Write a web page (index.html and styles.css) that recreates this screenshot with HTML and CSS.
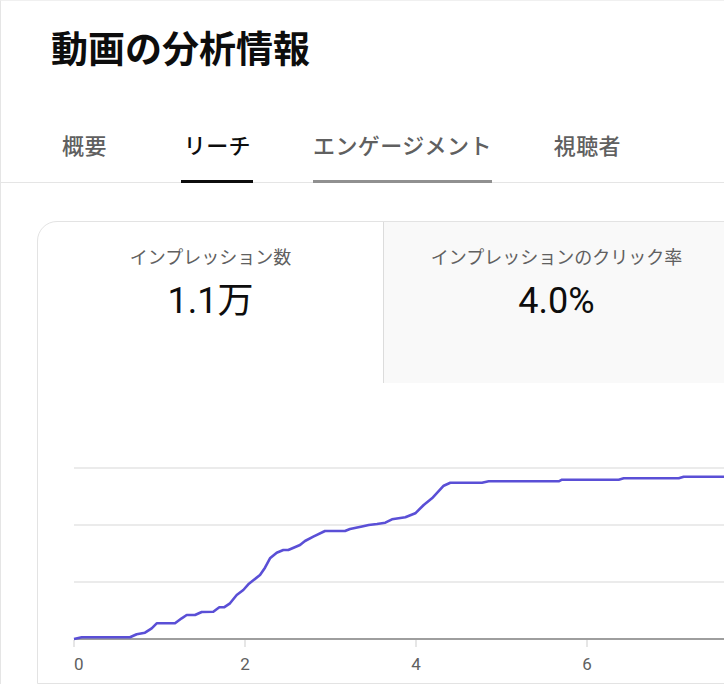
FILE: index.html
```html
<!DOCTYPE html>
<html lang="ja">
<head>
    <meta charset="UTF-8">
    <meta name="viewport" content="width=device-width, initial-scale=1.0">
    <title>動画の分析情報</title>
    <link rel="stylesheet" href="styles.css">
</head>
<body>
    <div class="page">
        <h1 class="page-title">動画の分析情報</h1>

        <nav class="tabs">
            <a class="tab first">概要</a>
            <a class="tab active">リーチ</a>
            <a class="tab hover">エンゲージメント</a>
            <a class="tab">視聴者</a>
        </nav>

        <section class="card">
            <div class="metrics">
                <div class="metric">
                    <div class="metric-label">インプレッション数</div>
                    <div class="metric-value">1.1万</div>
                </div>
                <div class="metric selected">
                    <div class="metric-label">インプレッションのクリック率</div>
                    <div class="metric-value">4.0%</div>
                </div>
            </div>

            <div class="chart">
                <svg width="760" height="300" viewBox="38 383 760 300">
                    <!-- grid -->
                    <g class="grid">
                        <line x1="74" y1="468" x2="798" y2="468"></line>
                        <line x1="74" y1="525" x2="798" y2="525"></line>
                        <line x1="74" y1="582" x2="798" y2="582"></line>
                    </g>
                    <g class="ticks">
                        <line x1="74" y1="640" x2="74" y2="647"></line>
                        <line x1="245" y1="640" x2="245" y2="647"></line>
                        <line x1="416" y1="640" x2="416" y2="647"></line>
                        <line x1="587" y1="640" x2="587" y2="647"></line>
                        <line x1="758" y1="640" x2="758" y2="647"></line>
                    </g>
                    <line class="axis" x1="74" y1="639" x2="798" y2="639"></line>

                    <path class="series" d="M74,639 L81.7,637.3 L130,637.3 L136.7,634.3 L145,632.7 L151.7,628.3 L156.7,623.3 L175,623.3 L181.7,618.3 L186.7,615 L195,615 L201.7,612 L213.3,611.7 L219.3,607.3 L224,607.3 L230,603.3 L236.7,595 L243.3,590 L248.3,584.3 L260,575 L265,567.7 L270,558.3 L276.7,552.7 L283.3,550 L288.3,550 L300,545 L305,541 L313.3,536.7 L325,531 L345,531 L350,529 L362,526.5 L368.7,525 L377,524 L385.3,522.7 L392,519.3 L405.3,517.3 L415.3,513.3 L423.7,505 L432,498.3 L443.7,485.7 L450.3,482.7 L482,482.7 L488.7,481.3 L558.7,481.3 L562,479.7 L618.7,479.7 L623.7,478.3 L678.7,478.3 L683.7,476.7 L798,476.7"></path>

                    <g class="labels">
                        <text x="74" y="670" text-anchor="start">0</text>
                        <text x="245" y="670" text-anchor="middle">2</text>
                        <text x="416" y="670" text-anchor="middle">4</text>
                        <text x="587" y="670" text-anchor="middle">6</text>
                    </g>
                </svg>
            </div>
        </section>
    </div>
</body>
</html>
```

FILE: styles.css
```css
* {
    margin: 0;
    padding: 0;
    box-sizing: border-box;
}

html, body {
    overflow: hidden;
}

body {
    background-color: #fff;
    color: #0d0d0d;
    font-family: Roboto, "Noto Sans CJK JP", sans-serif;
}

.page {
    min-height: 684px;
    border-left: 1px solid #e5e5e5;
    border-top: 1px solid #f0f0f0;
}

.page-title {
    padding: 28px 0 0 50px;
    font-size: 37px;
    line-height: 44px;
    font-weight: 700;
    color: #0d0d0d;
}

/* tabs */
.tabs {
    display: flex;
    gap: 62px;
    padding-left: 61px;
    border-bottom: 1px solid #e5e5e5;
}

.tab {
    height: 110px;
    margin-bottom: -1px;
    padding-top: 59px;
    font-size: 22px;
    line-height: 30px;
    letter-spacing: 0.4px;
    font-weight: 500;
    color: #606060;
    border-bottom: 3px solid transparent;
    cursor: pointer;
}

.tab.first {
    margin-right: 15px;
}

.tab.active {
    color: #0d0d0d;
    padding-left: 3px;
    padding-right: 2px;
    margin-left: -3px;
    margin-right: -2px;
    border-bottom-color: #0d0d0d;
}

.tab.hover {
    border-bottom-color: #909090;
}

/* card */
.card {
    width: 1000px;
    margin: 38px 0 0 36px;
    border: 1px solid #e3e3e3;
    border-radius: 20px 0 0 0;
    overflow: hidden;
}

.metrics {
    display: flex;
}

.metric {
    width: 345px;
    height: 161px;
    padding-top: 24px;
    text-align: center;
}

.metric.selected {
    width: 346px;
    border-left: 1px solid #dcdcdc;
    background-color: #f9f9f9;
}

.metric-label {
    font-size: 18px;
    line-height: 24px;
    color: #606060;
}

.metric-value {
    margin-top: 9px;
    font-size: 36px;
    line-height: 44px;
    color: #0d0d0d;
}

.chart svg {
    display: block;
}

.grid line {
    stroke: #ebebeb;
    stroke-width: 2;
}

.ticks line {
    stroke: #dedede;
    stroke-width: 1.5;
}

.axis {
    stroke: #9e9e9e;
    stroke-width: 2;
}

.series {
    fill: none;
    stroke: #5a4fd6;
    stroke-width: 2.6;
    stroke-linejoin: round;
}

.labels text {
    font-family: Roboto, sans-serif;
    font-size: 17px;
    fill: #606060;
}
```
